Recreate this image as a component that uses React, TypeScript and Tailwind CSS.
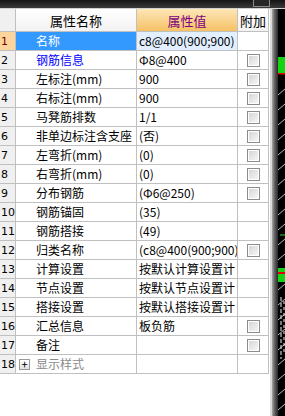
import React from "react";

interface Row {
  n: number;
  name: string;
  value: string;
  check?: boolean;
}

const rows: Row[] = [
  { n: 1, name: "名称", value: "c8@400(900;900)" },
  { n: 2, name: "钢筋信息", value: "Φ8@400", check: true },
  { n: 3, name: "左标注(mm)", value: "900", check: true },
  { n: 4, name: "右标注(mm)", value: "900", check: true },
  { n: 5, name: "马凳筋排数", value: "1/1", check: true },
  { n: 6, name: "非单边标注含支座", value: "(否)", check: true },
  { n: 7, name: "左弯折(mm)", value: "(0)", check: true },
  { n: 8, name: "右弯折(mm)", value: "(0)", check: true },
  { n: 9, name: "分布钢筋", value: "(Φ6@250)", check: true },
  { n: 10, name: "钢筋锚固", value: "(35)" },
  { n: 11, name: "钢筋搭接", value: "(49)" },
  { n: 12, name: "归类名称", value: "(c8@400(900;900)", check: true },
  { n: 13, name: "计算设置", value: "按默认计算设置计" },
  { n: 14, name: "节点设置", value: "按默认节点设置计" },
  { n: 15, name: "搭接设置", value: "按默认搭接设置计" },
  { n: 16, name: "汇总信息", value: "板负筋", check: true },
  { n: 17, name: "备注", value: "", check: true },
  { n: 18, name: "显示样式", value: "" },
];

function CheckBox() {
  return (
    <div className="w-[13px] h-[13px] border border-[#8c8c8c] bg-white p-px">
      <div className="w-full h-full bg-gradient-to-br from-[#d6d6d6] to-[#f6f6f6]" />
    </div>
  );
}

function CadStrip() {
  const diagonals = [];
  for (let y = 80; y < 407; y += 15) {
    diagonals.push(<line key={y} x1="0" y1={y + 6} x2="7" y2={y} stroke="#e8e8e8" strokeWidth="0.8" />);
  }
  return (
    <svg width="7" height="407" viewBox="0 0 7 407" className="block">
      <rect width="7" height="407" fill="#000" />
      {diagonals}
      <rect x="0" y="48" width="7" height="17" fill="#12d412" />
      <rect x="0" y="64" width="7" height="1.5" fill="#e00000" />
      <line x1="2" y1="226" x2="7" y2="226" stroke="#22dd22" strokeWidth="1" />
      <rect x="0" y="259" width="7" height="14" fill="#18d018" />
      <rect x="0" y="263" width="7" height="2" fill="#e00000" />
      <line x1="3" y1="288" x2="3" y2="350" stroke="#f0f0f0" strokeWidth="1" strokeDasharray="4 2" />
      <line x1="6" y1="292" x2="6" y2="345" stroke="#f0f0f0" strokeWidth="1" strokeDasharray="3 3" />
    </svg>
  );
}

export default function App() {
  return (
    <div
      className="w-[285px] h-[416px] flex flex-col bg-white overflow-hidden"
      style={{ fontFamily: '"Noto Sans CJK SC", "Noto Sans", sans-serif' }}
    >
      {/* top bar */}
      <div className="h-[9px] flex bg-gradient-to-b from-[#151515] to-[#3a3a3a] border-b border-[#d0d0d0]">
        <div className="ml-auto mr-[15px] w-[17px] h-[7px] border border-t-0 border-[#8a8a8a] bg-[#262626]" />
      </div>

      <div className="flex flex-1">
        {/* property grid */}
        <div className="w-[269px] flex flex-col text-[12px] leading-none text-black">
          {/* header */}
          <div className="grid grid-cols-[16px_121px_101px_31px] h-[23px] border-b border-[#c0c0c0]">
            <div className="bg-[#f0f0f0] border-r border-[#c0c0c0]" />
            <div className="bg-gradient-to-b from-white to-[#f2f2f2] border-r border-[#c0c0c0] flex items-center justify-center text-[13px]">
              属性名称
            </div>
            <div className="bg-gradient-to-b from-[#fde6b6] to-[#f5c163] border-r border-[#c0c0c0] flex items-center justify-center text-[13px] text-[#800080]">
              属性值
            </div>
            <div className="bg-gradient-to-b from-white to-[#f2f2f2] border-r border-[#c0c0c0] flex items-center justify-center text-[13px]">
              附加
            </div>
          </div>

          {rows.map((r) => {
            const selected = r.n === 1;
            return (
              <div key={r.n} className="grid grid-cols-[16px_121px_101px_31px] h-[19px] border-b border-[#c0c0c0]">
                <div
                  className={`border-r border-[#c0c0c0] flex items-center pl-[1px] text-[11px] ${
                    selected ? "bg-[#fcd59c] text-[#800000]" : "bg-[#f0f0f0]"
                  }`}
                  style={{ fontFamily: '"DejaVu Sans", sans-serif' }}
                >
                  {r.n}
                </div>
                <div
                  className={`border-r border-[#c0c0c0] flex items-center whitespace-nowrap overflow-hidden ${
                    selected ? "bg-[#3399ff] text-white pl-[20px]" : r.n === 18 ? "pl-[3px]" : "pl-[20px]"
                  } ${r.n === 2 ? "text-[#0000ff]" : ""}`}
                >
                  {r.n === 18 && (
                    <span className="w-[11px] h-[11px] mr-[6px] border border-[#9a9a9a] bg-gradient-to-b from-white to-[#e2e2e2] flex items-center justify-center text-[11px] text-black">
                      +
                    </span>
                  )}
                  <span className={r.n === 18 ? "text-[#8a8a8a]" : ""}>{r.name}</span>
                </div>
                <div
                  className={`border-r border-[#c0c0c0] flex items-center pl-[2px] whitespace-nowrap overflow-hidden ${
                    selected ? "bg-[#e1efff]" : ""
                  }`}
                >
                  {r.value}
                </div>
                <div className="border-r border-[#c0c0c0] flex items-center justify-center">
                  {r.check && <CheckBox />}
                </div>
              </div>
            );
          })}
        </div>

        {/* splitter + drawing area */}
        <div className="w-[3px] bg-[#dadada] border-l border-white" />
        <div className="w-[6px] bg-gradient-to-r from-[#a8a8a8] via-[#5a5a5a] to-[#2a2a2a]" />
        <CadStrip />
      </div>
    </div>
  );
}
